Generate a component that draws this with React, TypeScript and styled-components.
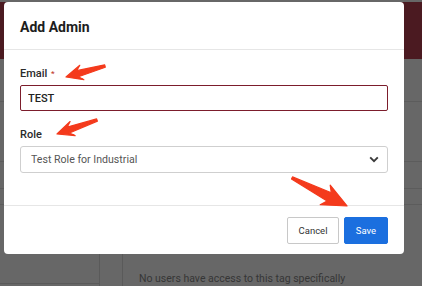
import React from 'react';
import styled, { createGlobalStyle } from 'styled-components';

const GlobalStyle = createGlobalStyle`
  html, body {
    margin: 0;
    padding: 0;
    background: #676767;
  }
  * { box-sizing: border-box; }
`;

type Pt = [number, number];

// skitch style arrow: thin tail, fat neck, big head
const arrowPoints = (tail: Pt, tip: Pt, head: number, half: number) => {
  const dx = tip[0] - tail[0];
  const dy = tip[1] - tail[1];
  const len = Math.hypot(dx, dy);
  const ux = dx / len;
  const uy = dy / len;
  const nx = -uy;
  const ny = ux;
  const bx = tip[0] - ux * head;
  const by = tip[1] - uy * head;
  const neck = half * 0.42;
  const p = (x: number, y: number) => `${x.toFixed(1)},${y.toFixed(1)}`;
  return [
    p(tail[0] + nx * 1.2, tail[1] + ny * 1.2),
    p(bx + nx * neck + ux * 3, by + ny * neck + uy * 3),
    p(bx + nx * half - ux * 1.5, by + ny * half - uy * 1.5),
    p(tip[0], tip[1]),
    p(bx - nx * half - ux * 1.5, by - ny * half - uy * 1.5),
    p(bx - nx * neck + ux * 3, by - ny * neck + uy * 3),
    p(tail[0] - nx * 1.2, tail[1] - ny * 1.2),
  ].join(' ');
};

const arrows: { tail: Pt; tip: Pt; head: number; half: number }[] = [
  { tail: [105, 66], tip: [66, 77], head: 15, half: 7.5 },
  { tail: [97, 120], tip: [57, 134], head: 15, half: 7.5 },
  { tail: [292, 178], tip: [347, 206], head: 23, half: 11 },
];

const App: React.FC = () => {
  return (
    <Page>
      <GlobalStyle />
      <TopBar />
      <Row $h={43} />
      <Row $h={60} />
      <Row $h={27} />
      <Row $h={16} />
      <Lower>
        <Sidebar>
          <SideItem />
        </Sidebar>
        <Gutter />
        <Content>
          <Empty>No users have access to this tag specifically</Empty>
        </Content>
      </Lower>

      <Modal>
        <Header>
          <Title>Add Admin</Title>
        </Header>
        <Body>
          <Field>
            <Label>
              Email <Req>*</Req>
            </Label>
            <TextInput defaultValue="TEST" />
          </Field>
          <Field>
            <Label>Role</Label>
            <SelectBox>
              <span>Test Role for Industrial</span>
              <svg width="10" height="7" viewBox="0 0 10 7">
                <path d="M1.2 1.4 L5 5.2 L8.8 1.4" fill="none" stroke="#3a3a3a" strokeWidth="1.9" />
              </svg>
            </SelectBox>
          </Field>
        </Body>
        <Footer>
          <Button>Cancel</Button>
          <Button $primary>Save</Button>
        </Footer>
      </Modal>

      <Marks width="422" height="286" viewBox="0 0 422 286">
        {arrows.map((a, i) => (
          <polygon
            key={i}
            points={arrowPoints(a.tail, a.tip, a.head, a.half)}
            fill="#f43a1c"
            stroke="#f43a1c"
            strokeWidth="1.2"
            strokeLinejoin="round"
          />
        ))}
      </Marks>
    </Page>
  );
};

export default App;

const Page = styled.div`
  position: relative;
  width: 422px;
  height: 286px;
  overflow: hidden;
  background: #676767;
  display: flex;
  flex-direction: column;
  font-family: Roboto, "Liberation Sans", sans-serif;
`;

const TopBar = styled.div`
  height: 57px;
  margin-top: 2px;
  background: #4b1a21;
  flex-shrink: 0;
`;

const Row = styled.div<{ $h: number }>`
  height: ${(p) => p.$h}px;
  flex-shrink: 0;
  border-bottom: 1px solid #5c5c5c;
`;

const Lower = styled.div`
  flex: 1;
  display: grid;
  grid-template-columns: 100px 23px 1fr;
`;

const Sidebar = styled.div`
  border-right: 1px solid #5a5a5a;
  padding-top: 78px;
`;

const SideItem = styled.div`
  height: 1px;
  background: #5a5a5a;
`;

const Gutter = styled.div`
  border-right: 1px solid #5a5a5a;
`;

const Content = styled.div`
  padding: 67px 0 0 16px;
`;

const Empty = styled.div`
  font-size: 10.5px;
  color: #363636;
  white-space: nowrap;
`;

const Modal = styled.div`
  position: absolute;
  left: 4px;
  top: 2px;
  width: 400px;
  height: 252px;
  background: #fff;
  border-radius: 4px;
  display: flex;
  flex-direction: column;
`;

const Header = styled.div`
  height: 48px;
  padding: 0 16px;
  display: flex;
  align-items: center;
  border-bottom: 1px solid #e6e6e6;
`;

const Title = styled.h2`
  margin: 0;
  font-size: 14px;
  font-weight: 700;
  color: #1d1d1d;
  padding-top: 2px;
`;

const Body = styled.div`
  flex: 1;
  padding: 17px 16px 0;
  display: flex;
  flex-direction: column;
  gap: 17px;
  border-bottom: 1px solid #e6e6e6;
`;

const Field = styled.div`
  display: flex;
  flex-direction: column;
  gap: 4px;
`;

const Label = styled.label`
  font-size: 11px;
  font-weight: 500;
  color: #2a2a2a;
  line-height: 14px;
`;

const Req = styled.span`
  color: #c0392b;
  font-size: 8px;
  vertical-align: top;
  margin-left: 1px;
`;

const TextInput = styled.input`
  height: 26px;
  border: 1px solid #7c1d2c;
  border-radius: 2px;
  padding: 0 7px;
  font-family: inherit;
  font-size: 11px;
  font-weight: 500;
  color: #222;
  outline: none;
`;

const SelectBox = styled.div`
  height: 27px;
  border: 1px solid #cfcfcf;
  border-radius: 3px;
  padding: 0 8px 0 10px;
  display: flex;
  align-items: center;
  justify-content: space-between;
  font-size: 10.6px;
  color: #555;
`;

const Footer = styled.div`
  height: 48px;
  padding: 0 16px;
  display: flex;
  align-items: center;
  justify-content: flex-end;
  gap: 5px;
`;

const Button = styled.button<{ $primary?: boolean }>`
  height: 27px;
  width: ${(p) => (p.$primary ? 44 : 52)}px;
  padding: 0;
  border-radius: 2px;
  font-family: inherit;
  font-size: 9.5px;
  border: 1px solid ${(p) => (p.$primary ? '#1b6fdf' : '#c8c8c8')};
  background: ${(p) => (p.$primary ? '#1b6fdf' : '#fff')};
  color: ${(p) => (p.$primary ? '#fff' : '#333')};
`;

const Marks = styled.svg`
  position: absolute;
  left: 0;
  top: 0;
  pointer-events: none;
`;
